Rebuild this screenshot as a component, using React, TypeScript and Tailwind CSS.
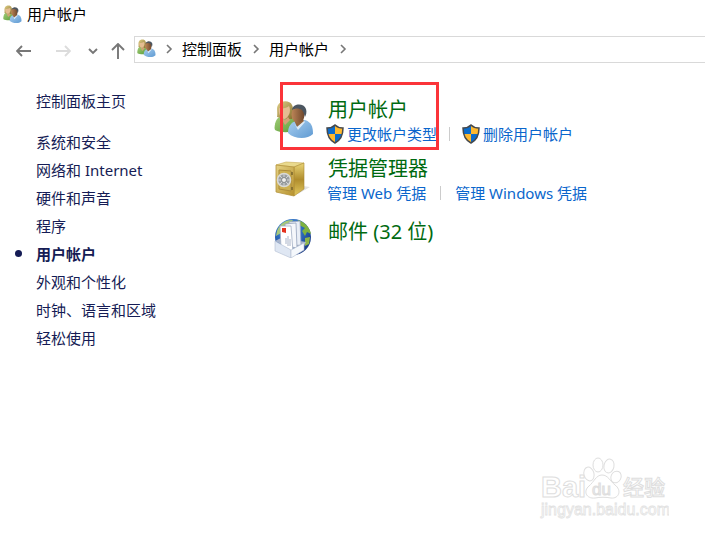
import type { ReactNode } from 'react'
import clsx from 'clsx'

function PeopleIcon({ className }: { className?: string }) {
  return (
    <svg viewBox="0 0 40 40" className={className} aria-hidden="true">
      <defs>
        <linearGradient id="green-shirt" x1="0" y1="0" x2="1" y2="1">
          <stop offset="0" stopColor="#a3cf7b" />
          <stop offset="1" stopColor="#5a9a35" />
        </linearGradient>
        <linearGradient id="blue-shirt" x1="0" y1="0" x2="1" y2="1">
          <stop offset="0" stopColor="#a9cff0" />
          <stop offset="1" stopColor="#5f9ad2" />
        </linearGradient>
        <linearGradient id="blond-hair" x1="0" y1="0" x2="1" y2="1">
          <stop offset="0" stopColor="#e0cf86" />
          <stop offset="1" stopColor="#86702f" />
        </linearGradient>
        <linearGradient id="dark-skin" x1="0" y1="0" x2="1" y2="0">
          <stop offset="0" stopColor="#bd8557" />
          <stop offset="1" stopColor="#6e472c" />
        </linearGradient>
      </defs>
      <path d="M0.500 28 C1 21 3 17 8 16 L18 16 C22 18 23 24 23 30 C17 33 6 33 1 30 Z" fill="url(#green-shirt)" />
      <path d="M3 17 C4 12 2 8 4 5 C7 0 16 0 18 5 C20 9 19 14 18 19 L12 19 Z" fill="url(#blond-hair)" />
      <path d="M5 8 C8 9 13 8 15 6 C17 10 16 16 11 19 C7 19 4 14 5 8 Z" fill="#e4bd92" />
      <path d="M7 18 L11 20 L14 17 L16 20 L11 25 Z" fill="#d2a177" />
      <path d="M14 33 C14 26 17 23 23 20 L31 20 C37 22 39 26 39 34 C33 40 20 39 14 33 Z" fill="url(#blue-shirt)" />
      <path d="M20 20 L29 18 L30 22 L23 27 Z" fill="#95663f" />
      <ellipse cx="24" cy="14.500" rx="6.500" ry="8.500" fill="url(#dark-skin)" />
      <path d="M18 10 C19 3 30 3 32 9 C33 12 32 15 31 17 C30 15 30 12 28 10 C25 8 21 8 18 10 Z" fill="#4c5660" />
      <path d="M20 23 L23 27 L30 21 L31 22 L24 30 Z" fill="#dcebf8" />
    </svg>
  )
}

function SafeIcon({ className }: { className?: string }) {
  return (
    <svg viewBox="0 0 40 40" className={className} aria-hidden="true">
      <defs>
        <linearGradient id="safe-front" x1="0" y1="0" x2="1" y2="1">
          <stop offset="0" stopColor="#e5d284" />
          <stop offset="1" stopColor="#b7922e" />
        </linearGradient>
        <linearGradient id="safe-side" x1="0" y1="0" x2="0" y2="1">
          <stop offset="0" stopColor="#ead577" />
          <stop offset="0.500" stopColor="#b08d2d" />
          <stop offset="1" stopColor="#e3c95f" />
        </linearGradient>
      </defs>
      <path d="M24 35 L36 28 L29 27 Z" fill="#e2e2e2" />
      <path d="M2 6 L12 3 L30 4 L20 8 Z" fill="#e9d98c" stroke="#c7ab54" strokeWidth="0.600" />
      <path d="M20 8 L30 4 L30 30 L20 37 Z" fill="url(#safe-side)" stroke="#a98831" strokeWidth="0.600" />
      <path d="M2 6 L20 8 L20 37 L2 33 Z" fill="url(#safe-front)" stroke="#b4933b" strokeWidth="0.800" />
      <path d="M5 11 L17 12 L17 32 L5 30 Z" fill="#cdb154" stroke="#ab8c3c" />
      <path d="M18 13 V16 M18 28 V31" stroke="#77642c" strokeWidth="1.500" />
      <circle cx="10" cy="21" r="6.500" fill="#9a9fa2" stroke="#d9dad8" strokeWidth="1.500" />
      <path d="M10 15 V27 M4 21 H16 M6 17 L14 25 M14 17 L6 25" stroke="#d2d4d5" />
      <circle cx="10" cy="21" r="2.500" fill="#eeeeee" stroke="#83888b" />
    </svg>
  )
}

function MailIcon({ className }: { className?: string }) {
  return (
    <svg viewBox="0 0 40 40" className={className} aria-hidden="true">
      <defs>
        <radialGradient id="globe" cx="0.400" cy="0.300" r="0.700">
          <stop offset="0" stopColor="#77bff0" />
          <stop offset="0.500" stopColor="#2e6cbd" />
          <stop offset="1" stopColor="#193b85" />
        </radialGradient>
      </defs>
      <circle cx="19" cy="19" r="18" fill="url(#globe)" />
      <path d="M3 13 C6 5 12 2 19 2 L16 6 L10 8 L7 15 L2 18 Z" fill="#a7c978" />
      <path d="M24 2 C31 4 36 10 37 16 L33 14 L31 18 L28 13 L31 10 L25 7 Z" fill="#7eb23f" />
      <path d="M31 20 L36 19 L35 26 L31 28 Z" fill="#8db548" />
      <path d="M1 23 L7 20 L32 24 L30 28 L17 31 Z" fill="#aab6cc" />
      <path d="M15 4 L26 3 L27 27 L16 28 Z" fill="#e9eef6" stroke="#98a5bd" strokeWidth="0.800" />
      <path d="M11 6 L22 5 L23 30 L12 28 Z" fill="#f5f7fb" stroke="#94a2bb" strokeWidth="0.800" />
      <path d="M6 8 L17 8 L19 34 L7 30 Z" fill="#ffffff" stroke="#a2aec4" strokeWidth="0.800" />
      <path d="M8 10 L12 10 L12 15 L8 14 Z" fill="#e5301e" />
      <path d="M12 20 V26 M14 18 V28 M16 21 V28" stroke="#a9b4c9" />
      <path d="M1 23 L17 32 L17 40 L1 33 Z" fill="#dfe7f3" stroke="#b1bdd2" strokeWidth="0.600" />
      <path d="M17 32 L30 25 L30 32 L17 40 Z" fill="#f5f8fc" stroke="#b1bdd2" strokeWidth="0.600" />
    </svg>
  )
}

function ShieldIcon() {
  return (
    <svg viewBox="0 0 18 20" className="h-5 w-[18px] shrink-0" aria-hidden="true">
      <defs>
        <clipPath id="shield-body">
          <path d="M9 1 C11 3 14 4 17 4 C17 11 15 16 9 19 C3 16 1 11 1 4 C4 4 7 3 9 1 Z" />
        </clipPath>
      </defs>
      <g clipPath="url(#shield-body)">
        <path d="M0 0 H9 V10 H0 Z M9 10 H18 V20 H9 Z" fill="#0b6ccc" />
        <path d="M9 0 H18 V10 H9 Z M0 10 H9 V20 H0 Z" fill="#ffb92e" />
      </g>
      <path d="M9 1 C11 3 14 4 17 4 C17 11 15 16 9 19 C3 16 1 11 1 4 C4 4 7 3 9 1 Z" fill="none" stroke="#46494d" strokeWidth="1.500" />
    </svg>
  )
}

function Chevron() {
  return (
    <svg viewBox="0 0 8 10" className="h-[10px] w-2 shrink-0" fill="none" stroke="#777777" strokeWidth="1.600" aria-hidden="true">
      <path d="M2 1 L6 5 L2 9" />
    </svg>
  )
}

function NavButton({ label, className, disabled, children }: { label: string; className?: string; disabled?: boolean; children: ReactNode }) {
  return (
    <button type="button" aria-label={label} disabled={disabled} className={className}>
      <svg viewBox="0 0 16 16" className="size-4" fill="none" stroke="currentColor" strokeWidth="1.900">
        {children}
      </svg>
    </button>
  )
}

function Watermark() {
  return (
    <svg
      viewBox="0 0 130 62"
      className="pointer-events-none absolute right-[36px] bottom-[15px] h-[62px] w-[130px] font-['Liberation_Sans','Noto_Sans_CJK_SC',sans-serif]"
      aria-hidden="true"
    >
      <g fill="#ffffff" stroke="#dedede">
        <text x="2" y="40" fontSize="29" fontWeight="700">Bai</text>
        <ellipse cx="50" cy="17" rx="5" ry="7" transform="rotate(-15 50 17)" />
        <ellipse cx="59" cy="8" rx="5" ry="7" />
        <ellipse cx="70" cy="9" rx="5" ry="7" transform="rotate(12 70 9)" />
        <ellipse cx="77" cy="20" rx="5" ry="6" transform="rotate(25 77 20)" />
        <path d="M63 18 C69 18 71 24 76 28 C83 33 80 42 72 41 C67 40 61 40 56 41 C47 42 44 34 50 29 C55 25 57 18 63 18 Z" />
        <text x="53" y="38" fontSize="17" fill="#f0f0f0">du</text>
        <text x="84" y="38" fontSize="21" fontWeight="500">经验</text>
      </g>
      <text x="2" y="58" fontSize="16" fill="#ffffff" stroke="#e2e2e2" strokeWidth="0.800">jingyan.baidu.com</text>
    </svg>
  )
}

const categories = ['系统和安全', '网络和 Internet', '硬件和声音', '程序', '用户帐户', '外观和个性化', '时钟、语言和区域', '轻松使用']

const items = [
  { title: '用户帐户', Icon: PeopleIcon, shield: true, links: ['更改帐户类型', '删除用户帐户'] },
  { title: '凭据管理器', Icon: SafeIcon, shield: false, links: ['管理 Web 凭据', '管理 Windows 凭据'] },
  { title: '邮件 (32 位)', Icon: MailIcon, shield: false, links: [] },
]

export default function App() {
  return (
    <div className="relative min-h-screen bg-white font-['Noto_Sans','Noto_Sans_CJK_SC',sans-serif] text-[15px] leading-5 text-black">
      <header>
        <div className="flex h-7 items-center gap-[5px] pl-[3px]">
          <PeopleIcon className="size-[19px]" />
          <h1>用户帐户</h1>
        </div>
        <div className="mt-2 flex items-center">
          <div className="flex w-[134px] items-center pt-0.5 pl-4 text-[#777777]">
            <NavButton label="后退">
              <path d="M15 8 H1 M6 3 L1 8 L6 13" />
            </NavButton>
            <NavButton label="前进" disabled className="ml-[23px] text-[#dcdcdc]">
              <path d="M1 8 H15 M10 3 L15 8 L10 13" />
            </NavButton>
            <NavButton label="最近的位置" className="ml-[14px]">
              <path d="M4 6 L8 10 L12 6" />
            </NavButton>
            <NavButton label="向上" className="ml-[9px]">
              <path d="M8 16 V1 M2 7 L8 1 L14 7" />
            </NavButton>
          </div>
          <nav aria-label="地址" className="flex h-[27px] flex-1 items-center border border-r-0 border-[#d9d9d9] pb-0.5 pl-0.5">
            <PeopleIcon className="size-[19px]" />
            <span className="ml-[9px]"><Chevron /></span>
            <a href="#panel" className="ml-[9px]">控制面板</a>
            <span className="ml-[10px]"><Chevron /></span>
            <a href="#accounts" className="ml-[9px]">用户帐户</a>
            <span className="ml-[10px]"><Chevron /></span>
          </nav>
        </div>
      </header>

      <div className="flex pt-6">
        <aside className="w-[274px] shrink-0 pl-9 leading-7 text-[#151c55]">
          <a href="#home">控制面板主页</a>
          <ul className="mt-[13px]">
            {categories.map((name) => {
              const current = name === '用户帐户'
              return (
                <li key={name} className="relative">
                  {current && <span className="absolute top-[10px] -left-[21px] size-[7px] rounded-full bg-[#151c55]" />}
                  <a href="#category" aria-current={current ? 'page' : undefined} className={clsx(current && 'font-bold')}>
                    {name}
                  </a>
                </li>
              )
            })}
          </ul>
        </aside>

        <main className="relative flex flex-1 flex-col gap-[11px] pt-[9px]">
          {items.map(({ title, Icon, shield, links }) => (
            <section key={title} className="flex gap-3">
              <Icon className="mt-1 size-10 shrink-0" />
              <div className={clsx(links.length === 0 && 'pt-1')}>
                <h2 className="pl-0.5 text-xl leading-7 text-[#006a10]">
                  <a href="#item">{title}</a>
                </h2>
                {links.length > 0 && (
                  <ul className={clsx('flex items-center text-[#0a66cc]', !shield && 'pl-px')}>
                    {links.map((link, i) => (
                      <li key={link} className="flex items-center">
                        {i > 0 && <span className={clsx('h-[14px] w-px bg-[#cccccc]', shield ? 'mx-3' : 'mx-[14px]')} />}
                        <a href="#task" className="flex items-center gap-[3px] whitespace-nowrap">
                          {shield && <ShieldIcon />}
                          {link}
                        </a>
                      </li>
                    ))}
                  </ul>
                )}
              </div>
            </section>
          ))}
          {/* Highlight around the first task */}
          <div className="pointer-events-none absolute -top-[5px] left-[6px] h-[68px] w-[159px] border-3 border-[#fb3439]" />
        </main>
      </div>

      <Watermark />
    </div>
  )
}
